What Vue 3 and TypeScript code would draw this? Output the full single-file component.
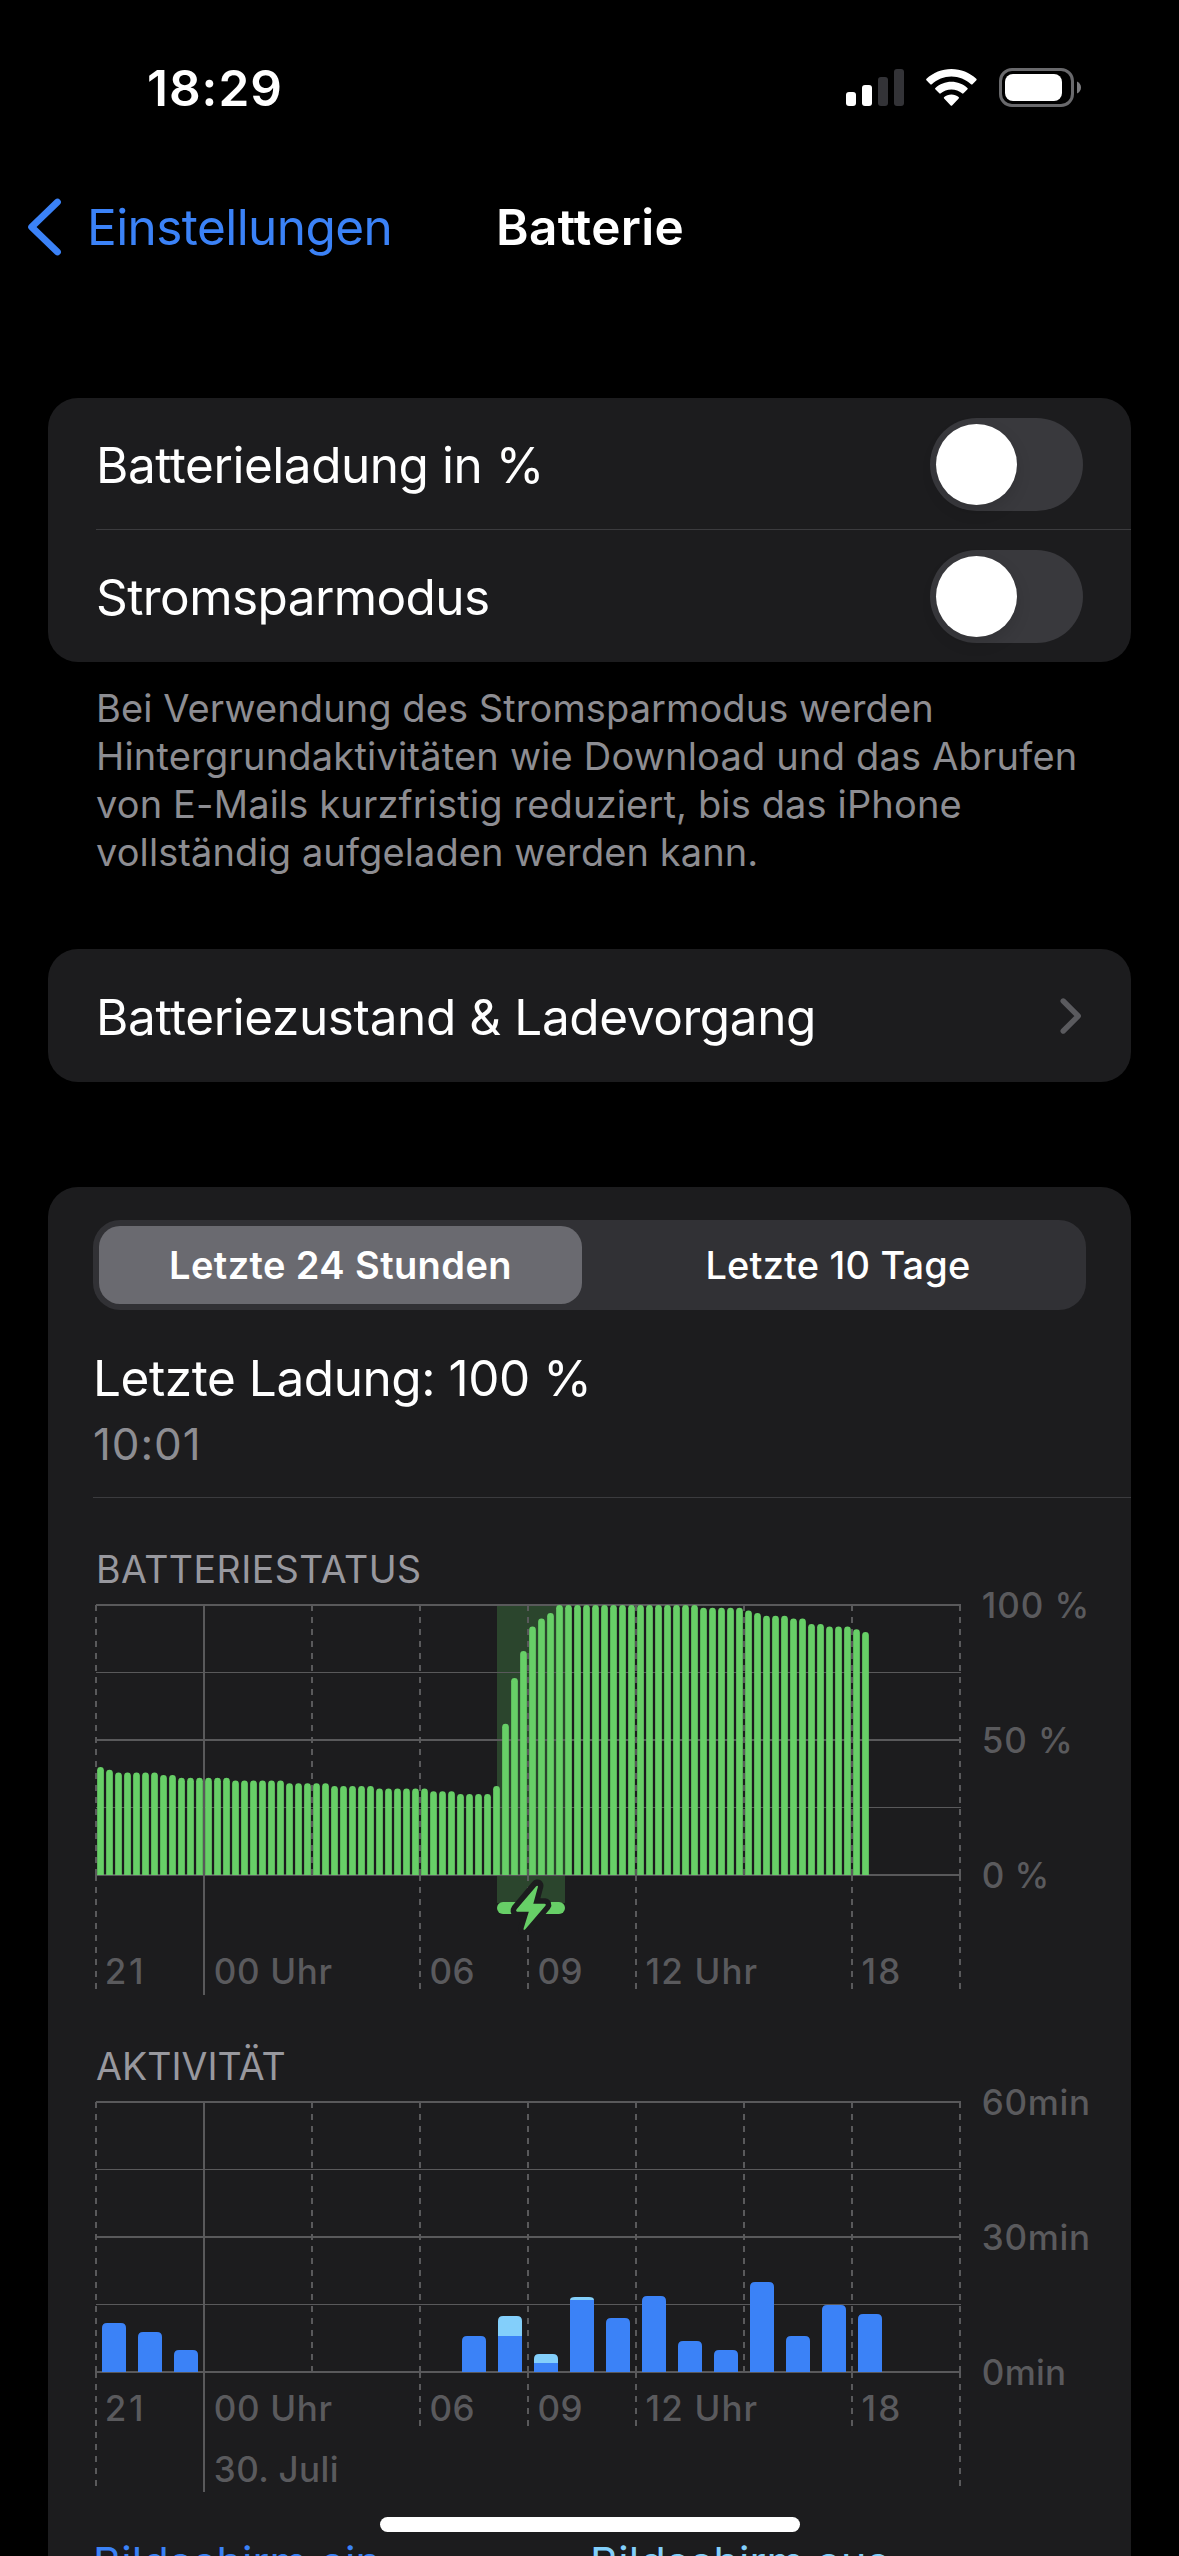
<script setup lang="ts">
interface AxisLabel {
  x: number
  text: string
  spacing: number
}

interface ActivityBar {
  hour: number
  on: number
  off?: number
}

const STEP = 108
const PLOT_H = 270

const toggles = [
  { label: 'Batterieladung in %', spacing: -0.46 },
  { label: 'Stromsparmodus', spacing: -0.58 },
]

const footer: { text: string; spacing: number }[] = [
  { text: 'Bei Verwendung des Stromsparmodus werden', spacing: 0.08 },
  { text: 'Hintergrundaktivitäten wie Download und das Abrufen', spacing: 0.2 },
  { text: 'von E-Mails kurzfristig reduziert, bis das iPhone', spacing: 0.14 },
  { text: 'vollständig aufgeladen werden kann.', spacing: 0.1 },
]

/* Battery level runs: [percent, number of quarter-hour samples] */
const levelRuns: [number, number][] = [
  [40, 1], [39, 1], [38, 5], [37, 2], [36, 6], [35, 6], [34, 5], [33, 5], [32, 6], [31, 3], [30, 4],
  [33, 1], [56, 1], [73, 1], [83, 1], [92, 1], [95, 1], [97, 1], [100, 16], [99, 5], [98, 1], [97, 1],
  [96, 3], [95, 2], [93, 2], [92, 3], [91, 1], [90, 1],
]
const levels = levelRuns.flatMap(([value, count]) => Array<number>(count).fill(value))

const activity: ActivityBar[] = [
  { hour: 0, on: 49 }, { hour: 1, on: 40 }, { hour: 2, on: 22 },
  { hour: 10, on: 36 }, { hour: 11, on: 36, off: 20 }, { hour: 12, on: 9, off: 9 },
  { hour: 13, on: 72, off: 3 }, { hour: 14, on: 54 }, { hour: 15, on: 76 }, { hour: 16, on: 31 },
  { hour: 17, on: 22 }, { hour: 18, on: 90 }, { hour: 19, on: 36 }, { hour: 20, on: 67 }, { hour: 21, on: 58 },
]

const hours: AxisLabel[] = [
  { x: 8.7, text: '21', spacing: 2.7 },
  { x: 117.8, text: '00 Uhr', spacing: 0.64 },
  { x: 333.5, text: '06', spacing: 0.4 },
  { x: 441.5, text: '09', spacing: 0.4 },
  { x: 549.6, text: '12 Uhr', spacing: 1.12 },
  { x: 765.6, text: '18', spacing: 2.07 },
]

const dashedColumns = [0, 2, 3, 4, 5, 6, 7, 8]
const percentTail: Record<number, number> = { 0: 114, 3: 114, 4: 114, 5: 114, 7: 114, 8: 114 }
const activityTail: Record<number, number> = { 0: 114, 3: 54, 4: 54, 5: 54, 7: 54, 8: 114 }

const percentScale = [
  { y: 0, text: '100 %', spacing: 0.91 },
  { y: 135, text: '50 %', spacing: 0.91 },
  { y: 270, text: '0 %', spacing: 0.39 },
]
const minuteScale = [
  { y: 0, text: '60min', spacing: 0.69 },
  { y: 135, text: '30min', spacing: 0.69 },
  { y: 270, text: '0min', spacing: 0.27 },
]

function levelPath(index: number, value: number): string {
  const x = index * 9 + 1.15
  const w = 6.7
  const r = w / 2
  const top = PLOT_H - value * 2.7
  return `M${x} ${PLOT_H}V${top + r}a${r} ${r} 0 0 1 ${w} 0V${PLOT_H}Z`
}

function roundedTop(x: number, bottom: number, height: number): string {
  const r = Math.min(5, height)
  return `M${x} ${bottom}V${bottom - height + r}q0 ${-r} 5 ${-r}h14q5 0 5 ${r}V${bottom}Z`
}

function onPath(bar: ActivityBar): string {
  const x = 6 + bar.hour * 36
  return bar.off ? `M${x} ${PLOT_H}v${-bar.on}h24v${bar.on}Z` : roundedTop(x, PLOT_H, bar.on)
}

function offPath(bar: ActivityBar): string {
  return roundedTop(6 + bar.hour * 36, PLOT_H - bar.on, bar.off ?? 0)
}
</script>

<template>
  <div class="screen">
    <header class="status">
      <span class="clock">18:29</span>
      <svg class="status-icons" width="238" height="42" viewBox="0 0 238 42">
        <rect x="0" y="25" width="10" height="14" rx="3" fill="#fff" />
        <rect x="16" y="18" width="10" height="21" rx="3" fill="#fff" />
        <rect x="32" y="10" width="10" height="29" rx="3" fill="#333337" />
        <rect x="48" y="2" width="10" height="37" rx="3" fill="#333337" />
        <g fill="#fff">
          <path d="M105.400 2C114.900 2 123.700 5.700 130.300 11.700Q131.100 12.400 130.400 13.200L126.500 17.200Q125.800 17.900 125 17.200C119.700 12.500 112.900 9.600 105.400 9.600S91.100 12.500 85.800 17.200Q85 17.900 84.300 17.200L80.400 13.200Q79.700 12.400 80.500 11.700C87.100 5.700 95.900 2 105.400 2Z" />
          <path d="M105.400 14.800C111.500 14.800 117.100 17.100 121.400 20.900Q122.200 21.600 121.500 22.300L117.500 26.300Q116.800 27 116 26.300C113.200 23.800 109.500 22.400 105.400 22.400S97.600 23.800 94.800 26.300Q94 27 93.300 26.300L89.300 22.300Q88.600 21.600 89.400 20.900C93.700 17.100 99.300 14.800 105.400 14.800Z" />
          <path d="M105.400 27.600C108.200 27.600 110.700 28.500 112.600 30Q113.400 30.700 112.700 31.400L106.100 38.500Q105.400 39.200 104.700 38.500L98.100 31.400Q97.400 30.700 98.200 30C100.100 28.500 102.600 27.600 105.400 27.600Z" />
        </g>
        <rect x="154.500" y="2.500" width="72" height="36" rx="11.500" fill="none" stroke="#69696c" stroke-width="3" />
        <rect x="159" y="7" width="57" height="27" rx="8" fill="#fff" />
        <path d="M231 14.500c2.500 1 4 3.400 4 6s-1.500 5-4 6Z" fill="#7c7c7f" />
      </svg>
    </header>

    <nav class="nav">
      <a class="back">
        <svg width="38" height="60" viewBox="0 0 38 60">
          <path d="M32.500 5L6.600 30L32.500 55" fill="none" stroke="#3b82f7" stroke-width="6.800" stroke-linecap="round" stroke-linejoin="round" />
        </svg>
        <span>Einstellungen</span>
      </a>
      <h1>Batterie</h1>
    </nav>

    <section class="card toggles">
      <div v-for="item in toggles" :key="item.label" class="row">
        <span class="label" :style="{ letterSpacing: item.spacing + 'px' }">{{ item.label }}</span>
        <span class="switch"><span class="knob"></span></span>
      </div>
    </section>

    <p class="footer">
      <span v-for="line in footer" :key="line.text" :style="{ letterSpacing: line.spacing + 'px' }">{{ line.text }}</span>
    </p>

    <section class="card health">
      <div class="row">
        <span class="label wide">Batteriezustand &amp; Ladevorgang</span>
        <svg class="chevron" width="26" height="40" viewBox="0 0 26 40">
          <path d="M5.200 5L20.200 20L5.200 35" fill="none" stroke="#5a5a5e" stroke-width="5.400" stroke-linecap="round" stroke-linejoin="round" />
        </svg>
      </div>
    </section>

    <section class="card usage">
      <div class="segments">
        <span class="segment active">Letzte 24 Stunden</span>
        <span class="segment">Letzte 10 Tage</span>
      </div>

      <div class="summary">
        <div class="charge">Letzte Ladung: 100 %</div>
        <div class="time">10:01</div>
      </div>

      <h2 class="first">BATTERIESTATUS</h2>
      <svg class="chart" width="1038" height="451" viewBox="-3 -12 1038 451">
        <rect x="401" y="0" width="68" height="298" fill="#2b452d" />
        <g class="grid">
          <path d="M0 0H865M0 135H865M0 270H865" stroke-width="2" />
          <path d="M0 67.500H865M0 202.500H865" stroke-width="1" />
          <path d="M108 0V390" stroke-width="2" />
          <template v-for="c in dashedColumns" :key="c">
            <path :d="`M${c * STEP} 0V${PLOT_H}`" stroke-width="2" stroke-dasharray="6 6" />
            <path v-if="percentTail[c]" :d="`M${c * STEP} ${PLOT_H}v${percentTail[c]}`" stroke-width="2" stroke-dasharray="6 6" />
          </template>
        </g>
        <g fill="#67cf67">
          <path v-for="(value, i) in levels" :key="i" :d="levelPath(i, value)" />
        </g>
        <rect x="401" y="297" width="68" height="12" rx="6" fill="#67cf67" />
        <path d="M442 280.500L437.300 298.700H448.500Q450.600 299 449.400 300.800L429.300 324.600Q427.200 326 427.600 323.600L432.800 306.700H421Q419.300 306.200 420.600 304.300L440 280.900Q441.500 279.300 442 280.500Z" fill="#1c1c1e" stroke="#1c1c1e" stroke-width="11" stroke-linejoin="round" />
        <path d="M442 281.500L437.300 298.700H448.500Q450.600 299 449.400 300.800L429.300 324.300Q427.200 326 427.600 323.600L432.800 306.700H421Q419.300 306.200 420.600 304.300L440 281.600Q441.500 279.900 442 281.500Z" fill="#67cf67" />
        <g class="axis">
          <text v-for="h in hours" :key="h.text" :x="h.x" y="379" :letter-spacing="h.spacing">{{ h.text }}</text>
          <text v-for="s in percentScale" :key="s.text" x="885.800" :y="s.y + 13" :letter-spacing="s.spacing">{{ s.text }}</text>
        </g>
      </svg>

      <h2 class="second">AKTIVITÄT</h2>
      <svg class="chart" width="1038" height="442" viewBox="-3 -12 1038 442">
        <g class="grid">
          <path d="M0 0H865M0 135H865M0 270H865" stroke-width="2" />
          <path d="M0 67.500H865M0 202.500H865" stroke-width="1" />
          <path d="M108 0V390" stroke-width="2" />
          <template v-for="c in dashedColumns" :key="c">
            <path :d="`M${c * STEP} 0V${PLOT_H}`" stroke-width="2" stroke-dasharray="6 6" />
            <path v-if="activityTail[c]" :d="`M${c * STEP} ${PLOT_H}v${activityTail[c]}`" stroke-width="2" stroke-dasharray="6 6" />
          </template>
        </g>
        <template v-for="bar in activity" :key="bar.hour">
          <path :d="onPath(bar)" fill="#3b82f7" />
          <path v-if="bar.off" :d="offPath(bar)" fill="#83cffb" />
        </template>
        <g class="axis">
          <text v-for="h in hours" :key="h.text" :x="h.x" y="319" :letter-spacing="h.spacing">{{ h.text }}</text>
          <text x="117.800" y="380" letter-spacing="0.390">30. Juli</text>
          <text v-for="s in minuteScale" :key="s.text" x="885.800" :y="s.y + 13" :letter-spacing="s.spacing">{{ s.text }}</text>
        </g>
      </svg>

      <div class="legend">
        <span class="screen-on">Bildschirm ein</span>
        <span class="screen-off">Bildschirm aus</span>
      </div>
    </section>

    <div class="home-indicator"></div>
  </div>
</template>

<style>
body {
  background: #000;
}
</style>

<style scoped>
.screen {
  position: relative;
  width: 1179px;
  height: 2556px;
  overflow: hidden;
  background: #000;
  color: #fff;
  font-family: Inter, 'Liberation Sans', sans-serif;
  font-size: 49.5px;
}

.status {
  display: flex;
  justify-content: space-between;
  align-items: flex-start;
  box-sizing: border-box;
  height: 196px;
  padding: 58px 95px 0 147px;
}

.clock {
  line-height: 60px;
  font-weight: 600;
  letter-spacing: 1px;
}

.status-icons {
  margin-top: 9px;
}

.nav {
  display: grid;
  grid-template-columns: 1fr auto 1fr;
  align-items: center;
  height: 62px;
  margin-bottom: 140px;
}

.back {
  display: flex;
  align-items: center;
  gap: 24px;
  padding-left: 25px;
  color: #3b82f7;
  letter-spacing: -0.57px;
}

h1 {
  margin: 0;
  padding-left: 1px;
  font-size: 49.5px;
  font-weight: 600;
  letter-spacing: 0.3px;
}

.nav span,
h1 {
  line-height: 60px;
}

.card {
  width: 1083px;
  margin-left: 48px;
  border-radius: 30px;
  background: #1c1c1e;
}

.row {
  position: relative;
  display: flex;
  align-items: center;
  justify-content: space-between;
  height: 132px;
  padding: 0 48px;
}

.toggles .row + .row::before {
  content: '';
  position: absolute;
  top: -1px;
  left: 48px;
  right: 0;
  height: 1px;
  background: #3b3b3e;
}

.label {
  padding-top: 2px;
  line-height: 60px;
}

.label.wide {
  letter-spacing: -0.4px;
}

.switch {
  display: flex;
  align-items: center;
  box-sizing: border-box;
  width: 153px;
  height: 93px;
  padding-left: 6px;
  border-radius: 47px;
  background: #39393d;
}

.knob {
  width: 81px;
  height: 81px;
  border-radius: 50%;
  background: #fff;
  box-shadow: 0 6px 16px rgba(0, 0, 0, 0.12);
}

.footer {
  display: flex;
  flex-direction: column;
  margin: 22px 0 73px 96px;
  color: #8d8d92;
  font-size: 38px;
  line-height: 48px;
  white-space: nowrap;
}

.chevron {
  margin-right: -1px;
}

.health .row {
  height: 133px;
}

.usage {
  box-sizing: border-box;
  height: 1420px;
  margin-top: 105px;
  padding: 33px 0 0 45px;
}

.segments {
  display: flex;
  box-sizing: border-box;
  width: 993px;
  height: 90px;
  padding: 6px 0 6px 6px;
  border-radius: 27px;
  background: #313135;
  font-size: 38px;
  font-weight: 500;
}

.segment {
  flex: 1;
  display: flex;
  align-items: center;
  justify-content: center;
  letter-spacing: 0.15px;
}

.segment.active {
  flex: 0 0 483px;
  margin-right: 8px;
  border-radius: 21px;
  background: #6a6a70;
  font-weight: 600;
  letter-spacing: 0.4px;
}

.summary {
  margin-top: 38px;
  padding-bottom: 26px;
  border-bottom: 1px solid #3b3b3e;
}

.charge {
  line-height: 60px;
  letter-spacing: -0.43px;
}

.time {
  margin-top: 9px;
  color: #8d8d92;
  font-size: 44px;
  line-height: 54px;
  letter-spacing: 0.9px;
}

h2 {
  margin: 0 0 0 3px;
  color: #98989e;
  font-size: 37.5px;
  font-weight: 400;
  line-height: 46px;
}

.first {
  margin-top: 49px;
  letter-spacing: 0.48px;
}

.second {
  letter-spacing: 0.05px;
}

.chart {
  display: block;
  overflow: visible;
}

.grid path {
  fill: none;
  stroke: #59595b;
}

.axis text {
  fill: #5a5a5d;
  font-size: 35px;
  font-weight: 500;
}

.legend {
  display: flex;
  font-size: 43px;
  line-height: 60px;
  letter-spacing: 0.15px;
}

.screen-on {
  width: 497px;
  color: #3b82f7;
}

.screen-off {
  color: #83cffb;
}

.home-indicator {
  position: absolute;
  left: 380px;
  top: 2517px;
  width: 420px;
  height: 15px;
  border-radius: 8px;
  background: #fff;
}
</style>
